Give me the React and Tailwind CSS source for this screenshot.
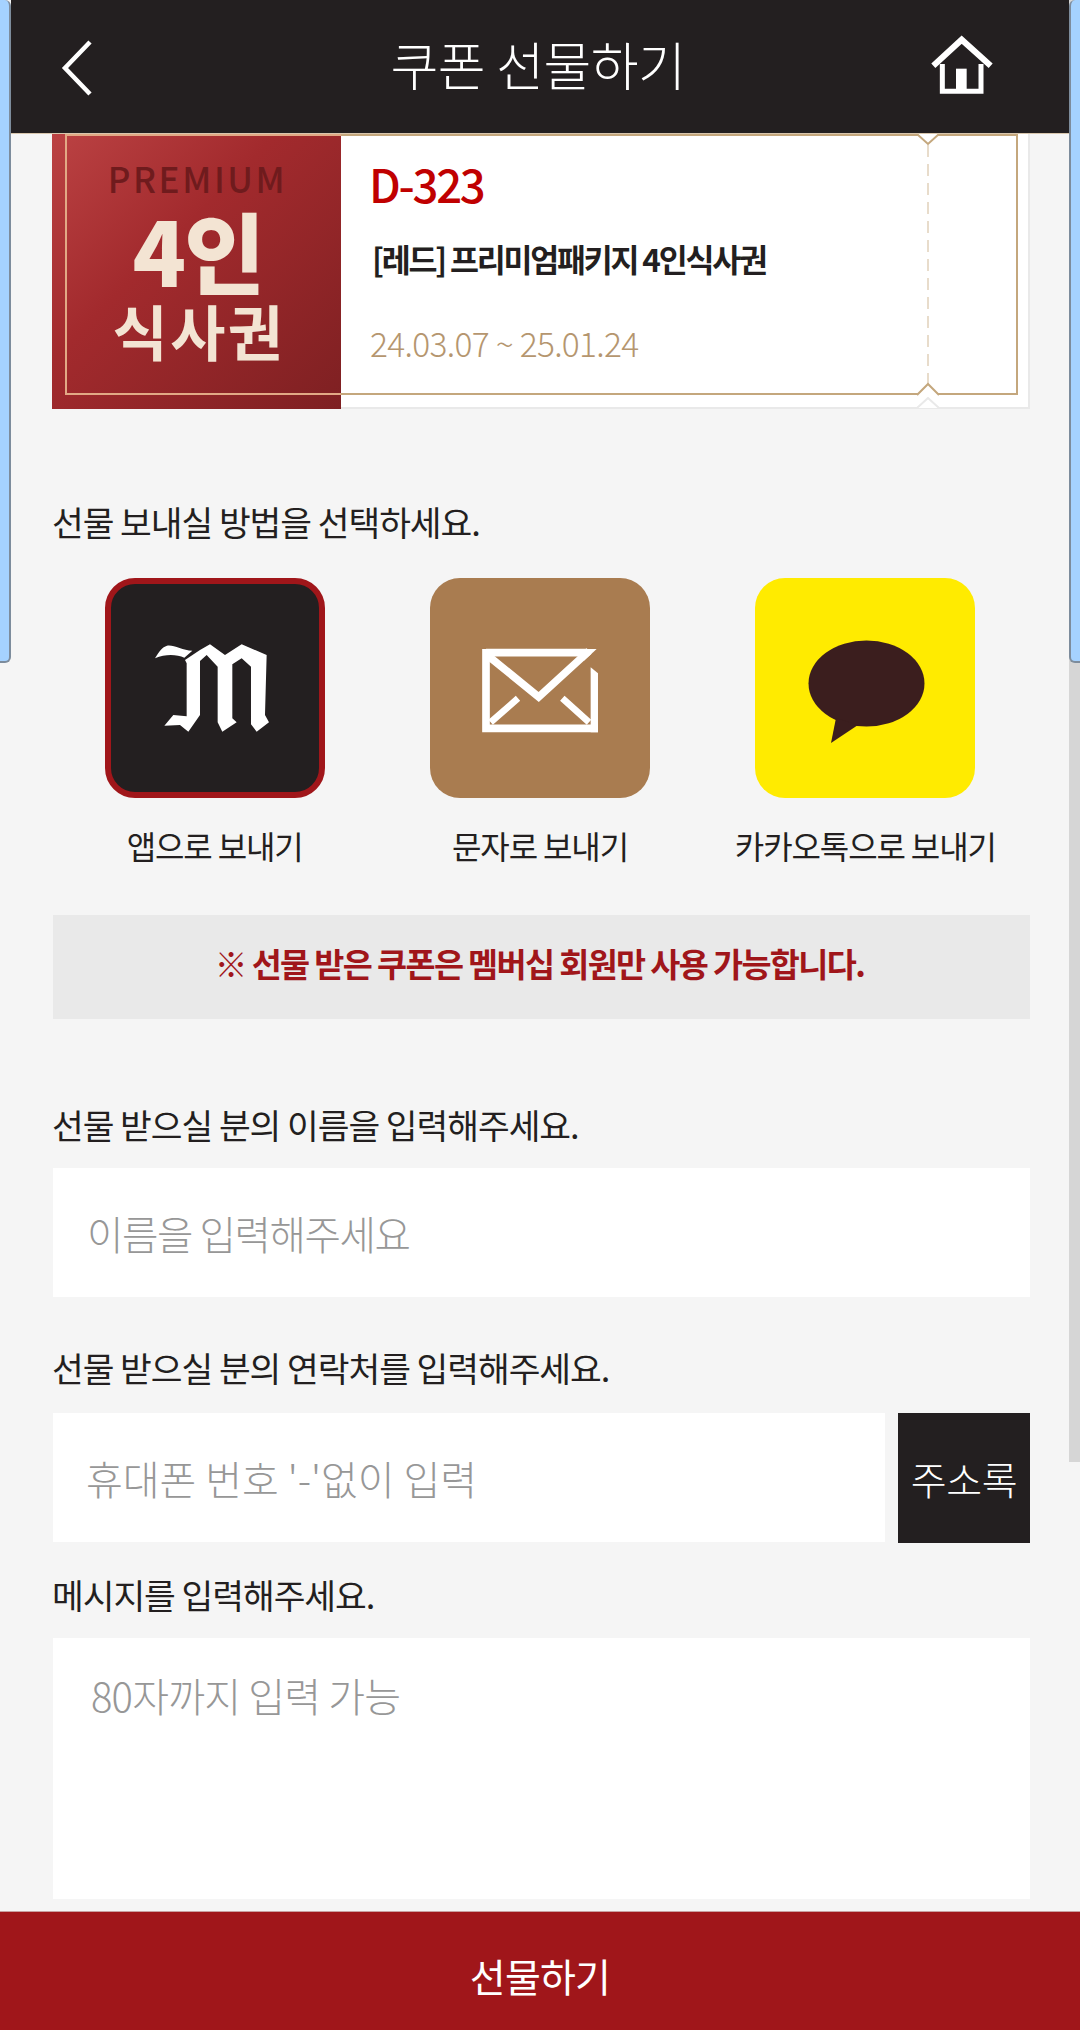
const font = { fontFamily: '"Noto Sans CJK KR", "Noto Sans", sans-serif' };

function Chevron() {
  return (
    <svg width="40" height="64" viewBox="0 0 40 64" className="block">
      <polyline points="34,6 9,32 34,58" fill="none" stroke="#fff" strokeWidth="4.5" />
    </svg>
  );
}

function House() {
  return (
    <svg width="100" height="80" viewBox="0 0 300 240" className="block">
      <path d="M40 113 L125 35 L212 113" fill="none" stroke="#fff" strokeWidth="18" />
      <path d="M67 108 V190 H183 V108" fill="none" stroke="#fff" strokeWidth="15" />
      <rect x="108" y="122" width="32" height="70" fill="#fff" />
    </svg>
  );
}

function Logo() {
  return (
    <svg viewBox="6 6 208 208" className="block w-full h-full">
      <g transform="translate(40 57) scale(0.3333)" fill="#fff">
        <path d="M30 70 C42 50 52 36 66 32 C85 28 112 46 142 47 L118 68 C95 58 62 56 30 70 Z" />
        <path d="M120 75 L165 45 L195 28 L240 60 L290 28 L365 60 L360 240 L372 262 L335 290 L318 268 L318 95 L290 70 L262 88 L262 250 L275 262 L232 290 L218 262 L218 95 L185 60 L165 78 L165 240 L130 290 L105 270 L58 272 L85 240 L125 244 L125 85 Z" />
      </g>
    </svg>
  );
}

function Envelope() {
  return (
    <svg viewBox="0 0 220 220" className="block w-full h-full">
      <g transform="translate(44 57) scale(0.3333)">
        <g fill="none" stroke="#fff" strokeWidth="23">
          <path d="M36 53 H340 M36 42 V280 H372" />
          <path d="M42 62 L194 186 L345 48" />
          <path d="M50 262 L132 190 M265 190 L345 262" strokeWidth="20" />
        </g>
        <polygon points="300,42 368,42 330,77" fill="#fff" />
        <polygon points="350,97 372,115 372,292 350,292" fill="#fff" />
      </g>
    </svg>
  );
}

function Kakao() {
  return (
    <svg viewBox="0 0 220 220" className="block w-full h-full">
      <ellipse cx="111.5" cy="105.5" rx="58" ry="43" fill="#3b1e1e" />
      <polygon points="81,140 76,165 103,147" fill="#3b1e1e" />
    </svg>
  );
}

function Method({ tile, label, children }) {
  return (
    <div className="flex flex-col items-center">
      <div className={tile}>{children}</div>
      <div className="mt-[25px] text-[32px] leading-[44px] tracking-[-0.035em] text-[#231f20] whitespace-nowrap">{label}</div>
    </div>
  );
}

function Coupon() {
  return (
    <div className="flex h-[275px] mr-[39px] ml-[41px] bg-white border-r-2 border-b-2 border-[#e9e9e9]">
      <div className="relative w-[289px] h-[275px] shrink-0 flex flex-col items-center bg-[linear-gradient(135deg,#bb4243_0%,#a22a2d_40%,#7e2022_100%)]">
        <div className="absolute left-[13px] right-0 top-0 bottom-[14px] border-l-2 border-t-2 border-b-2 border-[#e2a985]"></div>
        <div className="mt-[24px] pl-[2px] text-[35px] leading-[40px] font-medium tracking-[0.075em] text-[#6f1b1d]">PREMIUM</div>
        <div className="mt-[5px] pl-[3px] text-[88px] leading-[92px] font-black tracking-[-0.02em] text-[#f3e4d3]">4인</div>
        <div className="pl-[5px] text-[60px] leading-[70px] font-bold tracking-[0.04em] text-[#f3e4d3]">식사권</div>
      </div>
      <div className="relative flex-1 pl-[28px]">
        <div className="absolute left-0 right-[10px] top-0 bottom-[12px] border-r-2 border-t-2 border-b-2 border-[#c4a77d]"></div>
        <div className="absolute left-[586px] top-[11px] bottom-[16px] w-[2px] bg-[repeating-linear-gradient(to_bottom,#e8dccb_0_12px,transparent_12px_19px)]"></div>
        <svg width="24" height="12" viewBox="0 0 24 12" className="absolute left-[575px] top-0">
          <polyline points="1,0 12,10 23,0" fill="#fff" stroke="#c4a77d" strokeWidth="2" />
        </svg>
        <svg width="24" height="14" viewBox="0 0 24 14" className="absolute left-[575px] bottom-[11px]">
          <polyline points="1,13 12,2 23,13" fill="#fff" stroke="#c4a77d" strokeWidth="2" />
        </svg>
        <svg width="24" height="12" viewBox="0 0 24 12" className="absolute left-[575px] bottom-[-2px]">
          <polyline points="1,11 12,1 23,11" fill="#fff" stroke="#e9e9e9" strokeWidth="2" />
        </svg>
        <div className="relative pt-[19px] text-[45.5px] leading-[60px] font-medium tracking-[-0.05em] text-[#c00000]">D-323</div>
        <div className="relative mt-[25px] pl-[3px] text-[31.5px] leading-[40px] font-bold tracking-[-0.07em] text-[#231f20] whitespace-nowrap">[레드] 프리미엄패키지 4인식사권</div>
        <div className="relative mt-[43px] pl-[1px] text-[33.5px] leading-[44px] font-light tracking-[-0.02em] text-[#b5966f]">24.03.07 ~ 25.01.24</div>
      </div>
    </div>
  );
}

function Label({ className, children }) {
  return <div className={"-ml-[1px] text-[34.5px] leading-[44px] tracking-[-0.03em] text-[#231f20] whitespace-nowrap " + className}>{children}</div>;
}

function Field({ className, children }) {
  return (
    <div className={"bg-white flex items-center h-[129px] text-[#979797] font-light " + className}>{children}</div>
  );
}

export default function App() {
  return (
    <div style={font} className="w-[1080px] h-[2030px] overflow-hidden flex flex-col bg-[#f5f5f5]">
      <div className="flex h-[1911px]">
        <div className="w-[11px] shrink-0">
          <div className="h-[663px] bg-[#a5d2ff] border-r-2 border-b-2 border-[#7d8c9c] rounded-tr-md rounded-br-md"></div>
        </div>
        <div className="flex-1 min-w-0">
          <header className="h-[133px] bg-[#231f20] flex items-center">
            <div className="flex-1 pl-[45px] pt-[3px]"><Chevron /></div>
            <h1 className="text-[52px] font-light leading-none tracking-[-0.01em] text-white whitespace-nowrap pb-[6px]">쿠폰 선물하기</h1>
            <div className="flex-1 flex justify-end pr-[49px] pt-[3px]"><House /></div>
          </header>
          <main className="border-t border-[#c4a77d]/60">
            <Coupon />
            <div className="pl-[42px] pr-[39px]">
              <Label className="mt-[90px]">선물 보내실 방법을 선택하세요.</Label>
              <div className="grid grid-cols-3 mt-[35px] -ml-[1px] mr-[2px]">
                <Method tile="w-[220px] h-[220px] rounded-[30px] bg-[#231f20] border-[6px] border-[#a0161a]" label="앱으로 보내기"><Logo /></Method>
                <Method tile="w-[220px] h-[220px] rounded-[30px] bg-[#a97c50]" label="문자로 보내기"><Envelope /></Method>
                <Method tile="w-[220px] h-[220px] rounded-[30px] bg-[#ffeb00]" label="카카오톡으로 보내기"><Kakao /></Method>
              </div>
              <div className="mt-[48px] h-[104px] pb-[8px] pr-[4px] bg-[#e9e9e9] flex items-center justify-center text-[32.7px] font-bold tracking-[-0.05em] text-[#a0161a]">※ 선물 받은 쿠폰은 멤버십 회원만 사용 가능합니다.</div>
              <Label className="mt-[83px]">선물 받으실 분의 이름을 입력해주세요.</Label>
              <Field className="mt-[22px] pl-[34px] text-[39.6px] tracking-[-0.035em]">이름을 입력해주세요</Field>
              <Label className="mt-[48px]">선물 받으실 분의 연락처를 입력해주세요.</Label>
              <div className="flex gap-[13px] mt-[24px]">
                <Field className="flex-1 pl-[33px] text-[40px] tracking-[0em]">휴대폰 번호 '-'없이 입력</Field>
                <div className="w-[132px] h-[130px] bg-[#231f20] flex items-center justify-center text-[39px] font-light tracking-[-0.01em] text-white whitespace-nowrap">주소록</div>
              </div>
              <Label className="mt-[29px]">메시지를 입력해주세요.</Label>
              <div className="mt-[22px] h-[261px] bg-white pl-[38px] pt-[32px] text-[40px] leading-[50px] font-light tracking-[-0.02em] text-[#979797]">80자까지 입력 가능</div>
            </div>
          </main>
        </div>
        <div className="w-[11px] shrink-0 h-[1462px] bg-[#d6d6d6]">
          <div className="h-[663px] bg-[#a5d2ff] border-l-2 border-b-2 border-[#7d8c9c] rounded-tl-md rounded-bl-md"></div>
        </div>
      </div>
      <div className="h-[119px] border-t border-[#c9a0a0] bg-[#a0161a] flex items-center justify-center pt-[9px] text-[39px] tracking-[-0.02em] text-white">선물하기</div>
    </div>
  );
}
